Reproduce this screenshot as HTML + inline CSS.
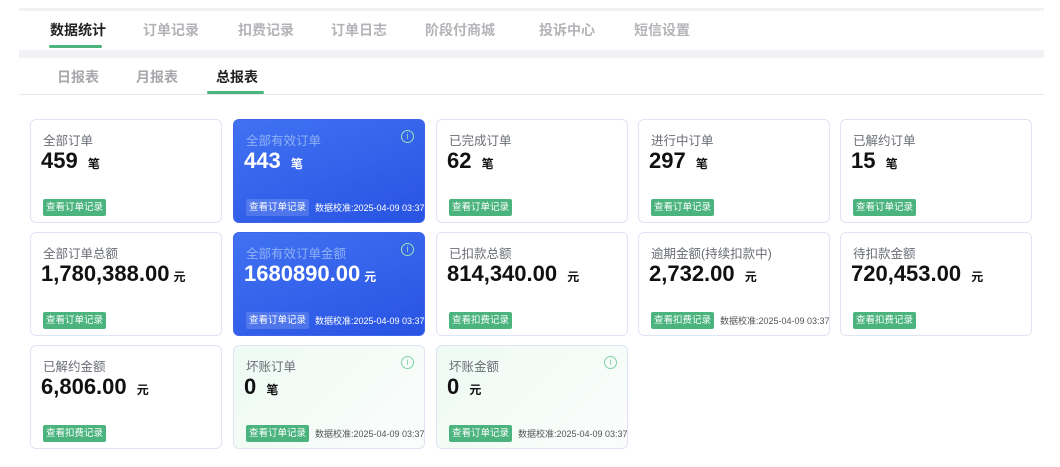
<!DOCTYPE html>
<html><head><meta charset="utf-8"><style>
*{margin:0;padding:0;box-sizing:border-box}
body{width:1060px;height:467px;background:#fff;font-family:"Liberation Sans","Noto Sans CJK SC",sans-serif;position:relative;overflow:hidden}
.a{position:absolute}
.tab{position:absolute;top:20px;font-size:14px;font-weight:bold;color:#b4b4b8;white-space:nowrap}
.sub{position:absolute;top:67px;font-size:14px;font-weight:bold;color:#a8a8ac}
.card{position:absolute;width:192px;height:104px;border:1.5px solid #dfe3f3;border-radius:6px;background:#fff}
.t{position:absolute;left:12px;top:10px;font-size:12.5px;color:#6a6d76}
.v{position:absolute;left:10px;top:28px;font-size:22px;font-weight:bold;color:#111;white-space:nowrap}
.v small{font-size:12px;margin-left:4px}
.b{position:absolute;left:12px;top:79px;height:17px;padding:0 3px;line-height:17px;font-size:9.5px;color:#fff;background:#4bb47e;border-radius:2px}
.d{position:absolute;left:81px;top:81px;font-size:9px;color:#555;white-space:nowrap}
.blue{background:linear-gradient(160deg,#4172f2,#2853e3);border-color:#3d66ea}
.blue .t{color:#8fb0f5}.blue .v{color:#fff}.blue .b{background:rgba(255,255,255,.15);color:#fff}.blue .d{color:#fff}
.green{background:linear-gradient(135deg,#eefaf3,#fbfdfc)}
.i{position:absolute;right:10px;top:10px;width:13px;height:13px;border:1.3px solid #7fd3a5;border-radius:50%;font-size:9px;line-height:11px;text-align:center;color:#7fd3a5}
.blue .i{border-color:#9ee0b8;color:#9ee0b8}
</style></head><body>
<div class="a" style="left:19px;top:8px;width:1025px;height:3px;background:#f0f2f5"></div>
<div class="a" style="left:19px;top:50px;width:1025px;height:8px;background:#f0f2f5"></div>
<div class="a" style="left:19px;top:94px;width:1025px;height:1px;background:#e8e8ec"></div>
<div class="tab" style="left:50px;color:#222">数据统计</div>
<div class="a" style="left:49px;top:45px;width:53px;height:3px;background:#4bb47e;border-radius:2px"></div>
<div class="tab" style="left:143px">订单记录</div>
<div class="tab" style="left:238px">扣费记录</div>
<div class="tab" style="left:331px">订单日志</div>
<div class="tab" style="left:425px">阶段付商城</div>
<div class="tab" style="left:539px">投诉中心</div>
<div class="tab" style="left:634px">短信设置</div>
<div class="sub" style="left:57px">日报表</div>
<div class="sub" style="left:136px">月报表</div>
<div class="sub" style="left:216px;color:#222">总报表</div>
<div class="a" style="left:207px;top:91px;width:57px;height:3px;background:#4bb47e;border-radius:2px"></div>

<div class="card" style="left:30px;top:119px"><div class="t">全部订单</div><div class="v">459 <small>笔</small></div><div class="b">查看订单记录</div></div>
<div class="card blue" style="left:233px;top:119px"><div class="t">全部有效订单</div><div class="i">i</div><div class="v">443 <small>笔</small></div><div class="b">查看订单记录</div><div class="d">数据校准:2025-04-09 03:37</div></div>
<div class="card" style="left:436px;top:119px"><div class="t">已完成订单</div><div class="v">62 <small>笔</small></div><div class="b">查看订单记录</div></div>
<div class="card" style="left:638px;top:119px"><div class="t">进行中订单</div><div class="v">297 <small>笔</small></div><div class="b">查看订单记录</div></div>
<div class="card" style="left:840px;top:119px"><div class="t">已解约订单</div><div class="v">15 <small>笔</small></div><div class="b">查看订单记录</div></div>

<div class="card" style="left:30px;top:232px"><div class="t">全部订单总额</div><div class="v">1,780,388.00<small>元</small></div><div class="b">查看订单记录</div></div>
<div class="card blue" style="left:233px;top:232px"><div class="t">全部有效订单金额</div><div class="i">i</div><div class="v">1680890.00<small>元</small></div><div class="b">查看订单记录</div><div class="d">数据校准:2025-04-09 03:37</div></div>
<div class="card" style="left:436px;top:232px"><div class="t">已扣款总额</div><div class="v">814,340.00 <small>元</small></div><div class="b">查看扣费记录</div></div>
<div class="card" style="left:638px;top:232px"><div class="t">逾期金额(持续扣款中)</div><div class="v">2,732.00 <small>元</small></div><div class="b">查看扣费记录</div><div class="d">数据校准:2025-04-09 03:37</div></div>
<div class="card" style="left:840px;top:232px"><div class="t">待扣款金额</div><div class="v">720,453.00 <small>元</small></div><div class="b">查看扣费记录</div></div>

<div class="card" style="left:30px;top:345px"><div class="t">已解约金额</div><div class="v">6,806.00 <small>元</small></div><div class="b">查看扣费记录</div></div>
<div class="card green" style="left:233px;top:345px"><div class="t">坏账订单</div><div class="i">i</div><div class="v">0 <small>笔</small></div><div class="b">查看订单记录</div><div class="d">数据校准:2025-04-09 03:37</div></div>
<div class="card green" style="left:436px;top:345px"><div class="t">坏账金额</div><div class="i">i</div><div class="v">0 <small>元</small></div><div class="b">查看订单记录</div><div class="d">数据校准:2025-04-09 03:37</div></div>
</body></html>
